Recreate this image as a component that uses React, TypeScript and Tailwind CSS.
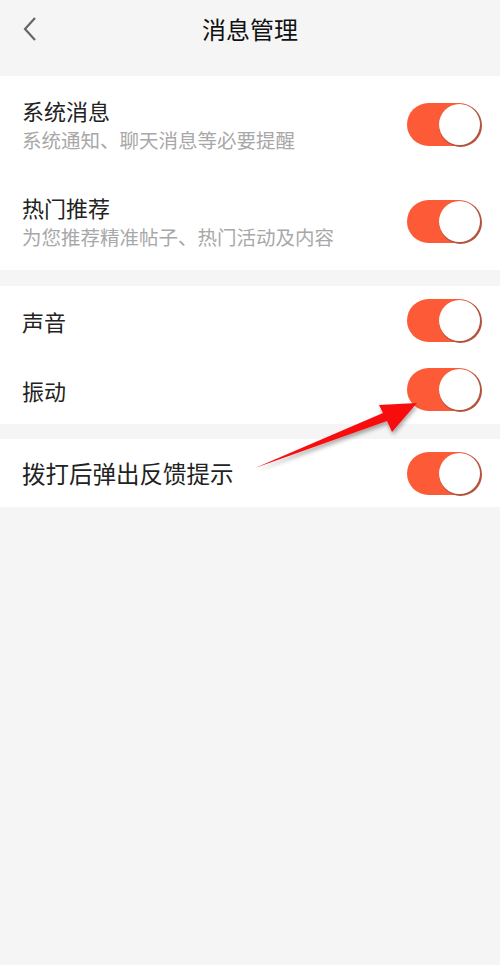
const font = { fontFamily: '"Noto Sans CJK SC", "Noto Sans", sans-serif' };

function Toggle() {
  return (
    <div className="relative h-[43px] w-[74px] shrink-0 rounded-full bg-[#fd5b38]">
      <div className="absolute right-[1px] top-[1px] h-[41px] w-[41px] rounded-full bg-white shadow-[1px_1px_0_1px_#b3533c]" />
    </div>
  );
}

function Row({ title, sub, h, size = "text-[22px]" }: { title: string; sub?: string; h: string; size?: string }) {
  return (
    <div className={`flex items-center justify-between pl-[22px] pr-[19px] ${h}`}>
      <div className="flex flex-col">
        <span className={`${size} leading-[30px] text-[#222]`}>{title}</span>
        {sub && <span className="text-[19.5px] leading-[28px] text-[#a8a8a8] mt-[1px]">{sub}</span>}
      </div>
      <Toggle />
    </div>
  );
}

export default function App() {
  return (
    <div className="relative h-[965px] w-[500px] bg-[#f5f5f5]" style={font}>
      <div className="relative flex h-[58px] items-center justify-center">
        <svg className="absolute left-[22px] top-[16px]" width="16" height="26" viewBox="0 0 16 26">
          <path d="M13 2 L3 13 L13 24" fill="none" stroke="#666" strokeWidth="2.2" />
        </svg>
        <span className="text-[24px] text-[#111]">消息管理</span>
      </div>

      <div className="mt-[18px] bg-white">
        <Row title="系统消息" sub="系统通知、聊天消息等必要提醒" h="h-[97px]" />
        <Row title="热门推荐" sub="为您推荐精准帖子、热门活动及内容" h="h-[97px]" />
      </div>

      <div className="mt-[16px] bg-white">
        <Row title="声音" h="h-[69px]" />
        <Row title="振动" h="h-[69px]" />
      </div>

      <div className="mt-[15px] bg-white">
        <Row title="拨打后弹出反馈提示" h="h-[68px]" size="text-[23.5px]" />
      </div>

      <svg className="pointer-events-none absolute left-0 top-0" width="500" height="965">
        <defs>
          <filter id="sh" x="-10%" y="-10%" width="130%" height="140%">
            <feDropShadow dx="1" dy="3" stdDeviation="2" floodColor="#000" floodOpacity="0.35" />
          </filter>
        </defs>
        <polygon
          points="255,468 383,413 379,405 417,403 392,432 387,421"
          fill="#f70f0f"
          filter="url(#sh)"
        />
      </svg>
    </div>
  );
}
